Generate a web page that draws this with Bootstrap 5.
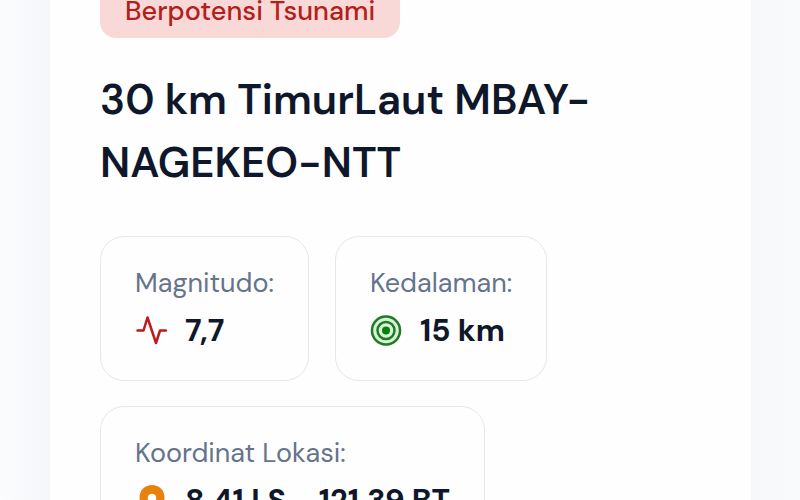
<!DOCTYPE html>
<html lang="id">
<head>
<meta charset="utf-8">
<meta name="viewport" content="width=device-width, initial-scale=1">
<title>Info Gempa</title>
<link href="https://cdn.jsdelivr.net/npm/bootstrap@5.3.0/dist/css/bootstrap.min.css" rel="stylesheet">
<style>
body { font-family: "DM Sans", Inter, "Liberation Sans", sans-serif; color: #0f172a; background: #f9fafc; }
.page { padding: 0 49px 0 50px; background: linear-gradient(90deg, #fbfcfe 0, #f4f6f9 50px, #f6f8fa calc(100% - 49px), #f9fafc 100%); }
.quake { background: #fefefe; padding: 0 50px 50px 50px; }
.status { background: #f8d9d7; color: #b3201b; font-size: 27px; line-height: 32px; font-weight: 500; padding: 0 25px 11px; border-radius: 0 0 16px 16px; margin-top: -5px; }
.place { font-size: 42px; line-height: 63px; font-weight: 600; margin: 30px 0 42px; max-width: 560px; }
.facts { gap: 25px 26px; }
.fact { border: 1px solid #e6e7ea; border-radius: 24px; padding: 24px 34px; }
.fact dt { font-size: 27px; line-height: 44px; font-weight: 400; color: #66738a; }
.fact dd { font-size: 31px; line-height: 51px; font-weight: 700; gap: 18px; }
.fact svg { width: 32px; height: 32px; flex: none; }
</style>
</head>
<body>
<div class="page vh-100 overflow-hidden">
  <main class="quake min-vh-100 d-flex flex-column align-items-start">
    <div class="status">Berpotensi Tsunami</div>
    <h1 class="place">30 km TimurLaut MBAY-NAGEKEO-NTT</h1>
    <dl class="facts d-flex flex-wrap mb-0">
      <div class="fact">
        <dt>Magnitudo:</dt>
        <dd class="d-flex align-items-center mb-0">
          <svg viewBox="0 0 32 32" fill="none" stroke="#b91c1c" stroke-width="2.5" stroke-linecap="round" stroke-linejoin="round" aria-hidden="true"><path d="M2.5 15.5h6l4-13 8.500 25.500 4-12.500h6"/></svg>
          7,7
        </dd>
      </div>
      <div class="fact">
        <dt>Kedalaman:</dt>
        <dd class="d-flex align-items-center mb-0">
          <svg viewBox="0 0 32 32" fill="none" stroke="#23782b" stroke-width="2.5" aria-hidden="true"><circle cx="16" cy="15.500" r="15.500" fill="#d5f8d2" stroke="none"/><circle cx="16" cy="15.500" r="14"/><circle cx="16" cy="15.500" r="8.500"/><circle cx="16" cy="15.500" r="4" fill="#087f0c" stroke="none"/></svg>
          15 km
        </dd>
      </div>
      <div class="fact">
        <dt>Koordinat Lokasi:</dt>
        <dd class="d-flex align-items-center mb-0">
          <svg viewBox="0 0 32 32" aria-hidden="true"><path d="M17 0C10 0 4.500 5 4.500 12.500c0 9 12.500 19.500 12.500 19.500s12.500-10.500 12.500-19.500C29.500 5 24 0 17 0z" fill="#e8820c"/><circle cx="17" cy="13" r="4.300" fill="#fff"/></svg>
          8.41 LS - 121.39 BT
        </dd>
      </div>
    </dl>
  </main>
</div>
<script src="https://cdn.jsdelivr.net/npm/bootstrap@5.3.0/dist/js/bootstrap.bundle.min.js"></script>
</body>
</html>
